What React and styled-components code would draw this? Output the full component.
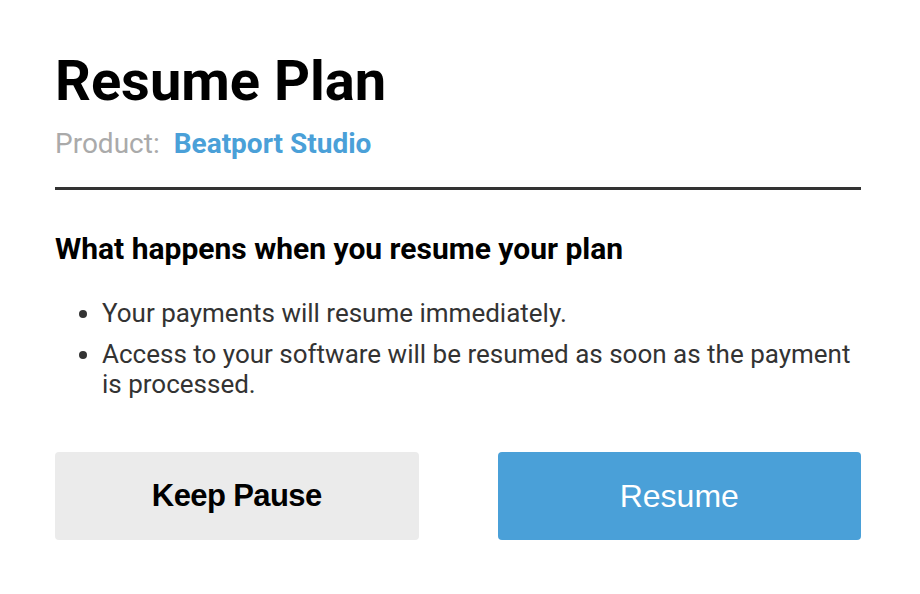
import React from 'react'
import styled, { createGlobalStyle } from 'styled-components'

const GlobalStyle = createGlobalStyle`
  body {
    margin: 0;
    background: #fff;
    font-family: Roboto, "Liberation Sans", sans-serif;
  }
`

const Panel = styled.div`
  padding: 48px 59px 0 55px;
`

const Title = styled.h1`
  margin: 0;
  font-size: 56px;
  font-weight: 700;
  line-height: 66px;
  color: #000;
`

const ProductRow = styled.div`
  display: flex;
  gap: 14px;
  margin-top: 13px;
  font-size: 28px;
  line-height: 34px;
  padding-bottom: 26px;
  border-bottom: 3px solid #333;
`

const Label = styled.span`
  color: #aaa;
`

const ProductName = styled.span`
  color: #4aa0d8;
  font-weight: 700;
`

const Subtitle = styled.h2`
  margin: 41px 0 0;
  font-size: 30px;
  font-weight: 700;
  line-height: 36px;
  color: #000;
`

const List = styled.ul`
  margin: 31px 0 0;
  padding-left: 47px;
  font-size: 26px;
  line-height: 30px;
  color: #333;

  li + li {
    margin-top: 11px;
  }
`

const Actions = styled.div`
  display: grid;
  grid-template-columns: 1fr 1fr;
  gap: 79px;
  margin-top: 53px;
`

const Button = styled.button`
  height: 88px;
  border: none;
  border-radius: 4px;
  font-family: "Liberation Sans", Arial, sans-serif;
  font-size: ${p => (p.$primary ? '32px' : '31px')};
  font-weight: ${p => (p.$primary ? 400 : 700)};
  letter-spacing: ${p => (p.$primary ? '0' : '-0.6px')};
  background: ${p => (p.$primary ? '#4aa0d8' : '#ebebeb')};
  color: ${p => (p.$primary ? '#fff' : '#000')};
  cursor: pointer;
`

export default function App() {
  return (
    <>
      <GlobalStyle />
      <Panel>
        <Title>Resume Plan</Title>
        <ProductRow>
          <Label>Product:</Label>
          <ProductName>Beatport Studio</ProductName>
        </ProductRow>
        <Subtitle>What happens when you resume your plan</Subtitle>
        <List>
          <li>Your payments will resume immediately.</li>
          <li>Access to your software will be resumed as soon as the payment is processed.</li>
        </List>
        <Actions>
          <Button>Keep Pause</Button>
          <Button $primary>Resume</Button>
        </Actions>
      </Panel>
    </>
  )
}
